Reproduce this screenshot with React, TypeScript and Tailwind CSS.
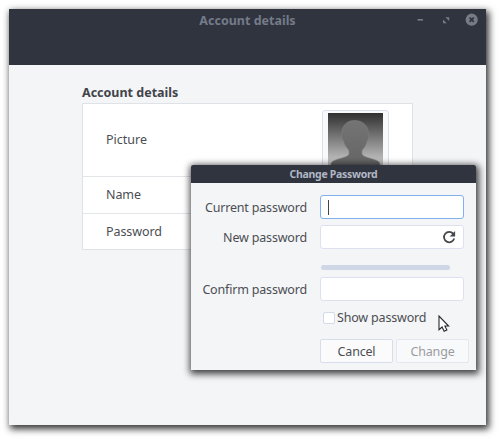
import React from 'react';

function WindowControls() {
  return (
    <svg className="absolute right-[6px] top-[3px]" width="64" height="16" viewBox="0 0 64 16">
      <rect x="1.500" y="7" width="5.500" height="1.600" fill="#777b84" />
      <path d="M29.300 5.200h3.900v3.900z M27 7.400v3.800h3.800z" fill="#777b84" />
      <circle cx="55.700" cy="7.700" r="6.100" fill="#777b84" />
      <path d="M53.600 5.600l4.200 4.200M57.800 5.600l-4.200 4.200" stroke="#30343f" strokeWidth="1.700" />
    </svg>
  );
}

function Avatar() {
  return (
    <svg width="55" height="68" viewBox="0 0 55 68" className="block">
      <defs>
        <linearGradient id="backdrop" x1="0" y1="0" x2="0" y2="1">
          <stop offset="0" stopColor="#303030" />
          <stop offset="0.72" stopColor="#c2c2c2" />
          <stop offset="1" stopColor="#d0d0d0" />
        </linearGradient>
        <linearGradient id="person" x1="0" y1="0" x2="0" y2="1">
          <stop offset="0" stopColor="#747474" />
          <stop offset="1" stopColor="#606060" />
        </linearGradient>
      </defs>
      <rect width="55" height="68" fill="url(#backdrop)" />
      <path
        d="M26.500 7.500C18.500 7.500 14 13 14 20.500c0 1-.8 1.600-.3 3.500.5 2 1.300 2.500 1.800 4 1 4 3 6.500 5.300 9 .6 3.500.4 5-1.600 6C15 45.500 7 46 4 49c-1.300 1.500-1.500 4-1.500 19h50c0-15-.3-17.500-1.500-19-3-3-11-3.500-15.200-6-2-1.200-2.200-2.500-1.600-6 2.300-2.500 4-5 5-9 .5-1.500 1.300-2 1.600-4 .3-1.900-.5-2.500-.5-3.500C40.300 13 35 7.500 26.500 7.500z"
        fill="url(#person)"
        stroke="#808080"
        strokeWidth="0.6"
      />
    </svg>
  );
}

function Reload() {
  return (
    <svg width="14" height="14" viewBox="0 0 14 14" fill="none">
      <path d="M11.200 3.700A5.200 5.200 0 1 0 12.200 8.600" stroke="#45474b" strokeWidth="1.800" />
      <path d="M13.100 1v5.500H7.700z" fill="#45474b" />
    </svg>
  );
}

const field = 'flex h-[24px] w-[144px] items-center rounded-[3px] border bg-white';

function DialogRow({ label, children }: { label: string; children: React.ReactNode }) {
  return (
    <div className="flex h-[24px] items-center">
      <div className="w-[116px] whitespace-nowrap pt-[2px] text-right">{label}</div>
      <div className="ml-[13px]">{children}</div>
    </div>
  );
}

function PasswordDialog() {
  return (
    <section className="absolute left-[191px] top-[165px] h-[205px] w-[285px] rounded-t-[2px] bg-[#f4f5f7] tracking-[-0.18px] shadow-[1px_2px_7px_2px_rgba(0,0,0,0.75)]">
      <header className="flex h-[18px] items-center justify-center rounded-t-[2px] bg-[#30343f] text-[10.5px] font-bold tracking-[-0.3px] text-[#b0b8c5]">
        Change Password
      </header>
      <div className="pt-[12px]">
        <DialogRow label="Current password">
          <div className={`${field} border-[#80b1ee] pl-[7px]`}>
            <span className="h-[15px] w-px bg-[#454545]" />
          </div>
        </DialogRow>
        <div className="h-[6px]" />
        <DialogRow label="New password">
          <div className={`${field} justify-end border-[#dde1ef] pr-[7px]`}>
            <Reload />
          </div>
        </DialogRow>
        <div className="ml-[130px] mt-[16px] h-[5px] w-[129px] rounded-full bg-[#cfd6e6]" />
        <div className="h-[7px]" />
        <DialogRow label="Confirm password">
          <div className={`${field} border-[#dde1ef]`} />
        </DialogRow>
        <label className="ml-[132px] mt-[9px] flex h-[15px] items-center gap-[2px] whitespace-nowrap">
          <span className="h-[12px] w-[12px] rounded-[2px] border border-[#d5daeb] bg-white" />
          <span className="pt-[2px]">Show password</span>
        </label>
        <div className="ml-[129px] mt-[14px] flex gap-[3px]">
          <button className="h-[24px] w-[73px] rounded-[2px] border border-[#d8ddec] bg-[#fbfbfc] pt-[2px]">Cancel</button>
          <button className="h-[24px] w-[73px] rounded-[2px] border border-[#e4e7f0] bg-[#f8f9fa] pt-[2px] text-[#9b9ca0]">Change</button>
        </div>
      </div>
    </section>
  );
}

export default function App() {
  return (
    <main className="relative h-[439px] w-[500px] overflow-hidden bg-white pl-[9px] pt-[9px] font-['Noto_Sans',sans-serif] text-[12.5px] leading-none text-[#4c4e53]">
      <div className="h-[416px] w-[477px] bg-[#f4f5f7] shadow-[2px_3px_7px_1px_rgba(0,0,0,0.8)]">
        <header className="relative h-[56px] bg-[#30343f] pt-[6px] text-center text-[12.5px] font-bold text-[#747b89]">
          Account details
          <WindowControls />
        </header>
        <div className="ml-[73px] w-[331px] pt-[21px]">
          <h1 className="h-[17px] pt-[1px] text-[12.5px] font-bold text-[#42444a]">Account details</h1>
          <div className="h-[147px] border border-[#dfe2e6] bg-white">
            <div className="flex h-[73px] items-center justify-between border-b border-[#e3e5e8] pl-[23px] pr-[23px]">
              <span className="pt-[1px]">Picture</span>
              <div className="mt-[11px] h-[72px] w-[67px] rounded-[3px] border border-[#dadff0] bg-[#f8f9fb] px-[5px] pt-[2px]">
                <Avatar />
              </div>
            </div>
            <div className="flex h-[37px] items-center border-b border-[#e3e5e8] pl-[23px] tracking-[-0.1px]">Name</div>
            <div className="flex h-[35px] items-center pl-[23px] pt-[2px] tracking-[-0.08px]">Password</div>
          </div>
        </div>
      </div>
      <PasswordDialog />
      <svg className="absolute left-[438px] top-[315px]" width="12" height="18" viewBox="0 0 12 18">
        <path d="M1 1v13.700l3.100-2.700 2 4.300 2.800-1.300-2-4h3.700z" fill="#fff" stroke="#292929" strokeWidth="1.100" />
      </svg>
    </main>
  );
}
